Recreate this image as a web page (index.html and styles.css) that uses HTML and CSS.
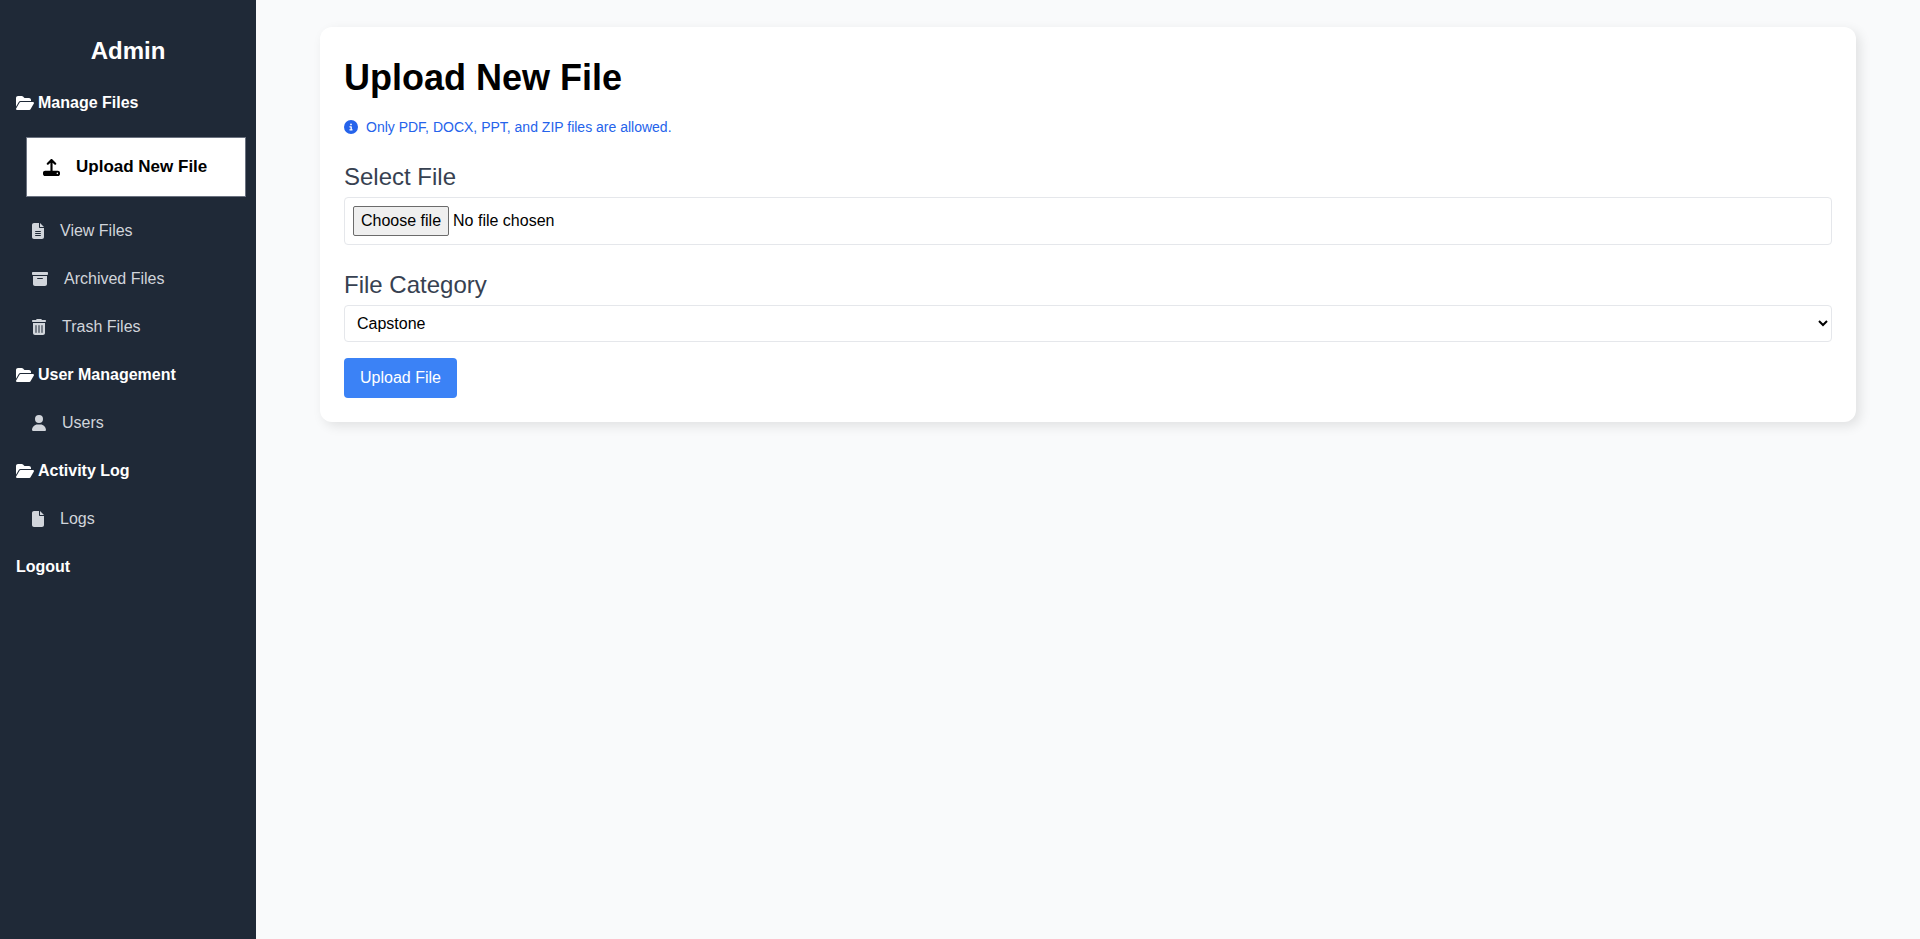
FILE: index.html
```html
<!DOCTYPE html>
<html lang="en">
<head>
<meta charset="utf-8">
<meta name="viewport" content="width=device-width, initial-scale=1">
<title>Upload New File</title>
<link rel="stylesheet" href="styles.css">
</head>
<body>
<svg class="sprite" aria-hidden="true">
  <symbol id="folder-open" viewBox="0 0 576 512"><path d="M88.700 223.800L0 375.800V96C0 60.700 28.700 32 64 32H181.500c17 0 33.300 6.700 45.300 18.700l26.500 26.500c12 12 28.300 18.700 45.300 18.700H416c35.300 0 64 28.700 64 64v32H144c-22.800 0-43.800 12.100-55.300 31.800zm27.600 16.100C122.100 230 132.600 224 144 224H544c11.500 0 22 6.100 27.700 16.100s5.700 22.200-.1 32.100l-112 192C453.900 474 443.400 480 432 480H32c-11.500 0-22-6.100-27.700-16.100s-5.700-22.200 .1-32.100l112-192z"/></symbol>
  <symbol id="upload" viewBox="0 0 512 512"><path d="M278.600 9.400c-12.500-12.500-32.800-12.500-45.300 0l-112 112c-12.500 12.500-12.500 32.800 0 45.300s32.800 12.500 45.300 0L224 109.300V352H64c-35.300 0-64 28.700-64 64v32c0 35.300 28.700 64 64 64H448c35.300 0 64-28.700 64-64V416c0-35.300-28.700-64-64-64H288V109.300l57.400 57.400c12.500 12.500 32.800 12.500 45.300 0s12.500-32.800 0-45.300zM432 408a24 24 0 1 1 0 48 24 24 0 1 1 0-48z"/></symbol>
  <symbol id="file-lines" viewBox="0 0 384 512"><path d="M64 0C28.700 0 0 28.700 0 64V448c0 35.300 28.700 64 64 64H320c35.300 0 64-28.700 64-64V160H256c-17.700 0-32-14.300-32-32V0H64zM256 0V128H384L256 0zM112 256H272c8.800 0 16 7.200 16 16s-7.200 16-16 16H112c-8.800 0-16-7.200-16-16s7.200-16 16-16zm0 64H272c8.800 0 16 7.200 16 16s-7.200 16-16 16H112c-8.800 0-16-7.200-16-16s7.200-16 16-16zm0 64H272c8.800 0 16 7.200 16 16s-7.200 16-16 16H112c-8.800 0-16-7.200-16-16s7.200-16 16-16z"/></symbol>
  <symbol id="archive" viewBox="0 0 512 512"><path d="M32 32H480c17.700 0 32 14.300 32 32V96c0 17.700-14.300 32-32 32H32C14.300 128 0 113.700 0 96V64C0 46.300 14.300 32 32 32zm0 128H480V416c0 35.300-28.700 64-64 64H96c-35.300 0-64-28.700-64-64V160zm128 80c0 8.800 7.200 16 16 16H336c8.800 0 16-7.200 16-16s-7.200-16-16-16H176c-8.800 0-16 7.200-16 16z"/></symbol>
  <symbol id="trash" viewBox="0 0 448 512"><path d="M135.200 17.700C140.600 6.800 151.700 0 163.800 0H284.200c12.100 0 23.200 6.800 28.600 17.700L320 32h96c17.700 0 32 14.300 32 32s-14.300 32-32 32H32C14.300 96 0 81.700 0 64S14.300 32 32 32h96l7.200-14.300zM32 128H416V448c0 35.300-28.700 64-64 64H96c-35.300 0-64-28.700-64-64V128zm96 64c-8.800 0-16 7.200-16 16V432c0 8.800 7.200 16 16 16s16-7.200 16-16V208c0-8.800-7.200-16-16-16zm96 0c-8.800 0-16 7.200-16 16V432c0 8.800 7.200 16 16 16s16-7.200 16-16V208c0-8.800-7.200-16-16-16zm96 0c-8.800 0-16 7.200-16 16V432c0 8.800 7.200 16 16 16s16-7.200 16-16V208c0-8.800-7.200-16-16-16z"/></symbol>
  <symbol id="user" viewBox="0 0 448 512"><path d="M224 256A128 128 0 1 0 224 0a128 128 0 1 0 0 256zm-45.700 48C79.800 304 0 383.800 0 482.300C0 498.700 13.300 512 29.700 512H418.300c16.400 0 29.700-13.300 29.700-29.700C448 383.800 368.200 304 269.700 304H178.300z"/></symbol>
  <symbol id="file" viewBox="0 0 384 512"><path d="M0 64C0 28.700 28.700 0 64 0H224V128c0 17.700 14.300 32 32 32H384V448c0 35.300-28.700 64-64 64H64c-35.300 0-64-28.700-64-64V64zm384 64H256V0L384 128z"/></symbol>
  <symbol id="info" viewBox="0 0 512 512"><path d="M256 512A256 256 0 1 0 256 0a256 256 0 1 0 0 512zM216 336h24V272H216c-13.300 0-24-10.700-24-24s10.700-24 24-24h48c13.300 0 24 10.700 24 24v88h8c13.300 0 24 10.700 24 24s-10.700 24-24 24H216c-13.300 0-24-10.700-24-24s10.700-24 24-24zm40-208a32 32 0 1 1 0 64 32 32 0 1 1 0-64z"/></symbol>
</svg>
<div class="layout">
  <nav class="sidebar" aria-label="Admin">
    <h2 class="brand">Admin</h2>
    <div class="section"><svg class="icon w18"><use href="#folder-open"/></svg>Manage Files</div>
    <a class="link active" href="#upload-file" aria-current="page"><svg class="icon w17"><use href="#upload"/></svg>Upload New File</a>
    <a class="link" href="#view"><svg class="icon w12"><use href="#file-lines"/></svg>View Files</a>
    <a class="link" href="#archived"><svg class="icon w16"><use href="#archive"/></svg>Archived Files</a>
    <a class="link" href="#trash-files"><svg class="icon w14"><use href="#trash"/></svg>Trash Files</a>
    <div class="section"><svg class="icon w18"><use href="#folder-open"/></svg>User Management</div>
    <a class="link" href="#users"><svg class="icon w14"><use href="#user"/></svg>Users</a>
    <div class="section"><svg class="icon w18"><use href="#folder-open"/></svg>Activity Log</div>
    <a class="link" href="#logs"><svg class="icon w12"><use href="#file"/></svg>Logs</a>
    <a class="section" href="#logout">Logout</a>
  </nav>
  <main class="main">
    <form class="card">
      <h1 class="title">Upload New File</h1>
      <p class="notice"><svg class="icon w14"><use href="#info"/></svg>Only PDF, DOCX, PPT, and ZIP files are allowed.</p>
      <label class="label" for="file-input">Select File</label>
      <label class="file-box" for="file-input">
        <input class="file-input" id="file-input" type="file" accept=".pdf,.docx,.ppt,.zip">
        <span class="file-button">Choose file</span>
        <span>No file chosen</span>
      </label>
      <label class="label" for="category">File Category</label>
      <select class="select" id="category"><option>Capstone</option></select>
      <button class="submit" type="submit">Upload File</button>
    </form>
  </main>
</div>
</body>
</html>
```
FILE: styles.css
```css
*, *::before, *::after {
  box-sizing: border-box;
}

body {
  margin: 0;
  background: #f9fafb;
  color: #000;
  font: 16px/24px "Liberation Sans", Arial, sans-serif;
}

.sprite {
  display: none;
}

.layout {
  display: flex;
  min-height: 100vh;
}

.sidebar {
  width: 256px;
  flex: none;
  padding: 33px 0;
  background: #1f2937;
  color: #fff;
}

.brand {
  margin: 0 0 10px;
  font-size: 24px;
  line-height: 36px;
  text-align: center;
}

.section,
.link {
  display: flex;
  align-items: center;
  text-decoration: none;
}

.section {
  gap: 4px;
  padding: 12px 16px;
  color: #fff;
  font-weight: bold;
}

.link {
  gap: 16px;
  padding: 12px 32px;
  color: #d1d5db;
}

.link.active {
  margin: 10px 10px 10px 26px;
  padding: 17px 16px;
  border: 1px solid #6b7280;
  background: #fff;
  color: #000;
  font-size: 17px;
  font-weight: bold;
}

.icon {
  height: 16px;
  flex: none;
  fill: currentColor;
}

.w12 { width: 12px; }
.w14 { width: 14px; }
.w16 { width: 16px; }
.w17 { width: 17px; height: 17px; }
.w18 { width: 18px; }

.main {
  flex: 1;
  padding: 27px 64px;
}

.card {
  padding: 24px;
  border-radius: 12px;
  background: #fff;
  box-shadow: 4px 4px 12px rgba(0, 0, 0, 0.1);
}

.title {
  margin: 0 0 12px;
  font-size: 36px;
  line-height: 54px;
}

.notice {
  display: flex;
  align-items: center;
  gap: 8px;
  margin: 0 0 24px;
  color: #2563eb;
  font-size: 14px;
  line-height: 20px;
}

.label {
  display: block;
  margin-bottom: 4px;
  color: #374151;
  font-size: 24px;
  line-height: 32px;
}

.file-box {
  display: flex;
  align-items: center;
  gap: 4px;
  margin-bottom: 24px;
  padding: 8px;
  border: 1px solid #e5e7eb;
  border-radius: 4px;
}

.file-input {
  position: absolute;
  width: 1px;
  height: 1px;
  opacity: 0;
}

.file-button {
  padding: 2px 7px;
  border: 1px solid #6b6b6b;
  border-radius: 2px;
  background: #efefef;
}

.select {
  display: block;
  width: 100%;
  height: 37px;
  margin-bottom: 16px;
  padding: 0 8px;
  border: 1px solid #e5e7eb;
  border-radius: 4px;
  background: #fff;
  color: #000;
  font: inherit;
}

.submit {
  display: block;
  padding: 8px 16px;
  border: 0;
  border-radius: 4px;
  background: #3b82f6;
  color: #fff;
  font: inherit;
}
```
